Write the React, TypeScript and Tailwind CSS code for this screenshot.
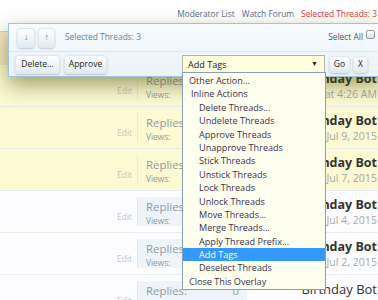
import React from 'react'

type Row = {
  selected: boolean
  bold: boolean
  date: string
}

const rows: Row[] = [
  { selected: true, bold: true, date: 'Today at 4:26 AM' },
  { selected: true, bold: true, date: 'Jul 9, 2015' },
  { selected: true, bold: true, date: 'Jul 7, 2015' },
  { selected: false, bold: true, date: 'Jul 4, 2015' },
  { selected: false, bold: true, date: 'Jul 2, 2015' },
  { selected: false, bold: false, date: 'Jul 1, 2015' },
]

const options: { label: string; indent: number; active?: boolean }[] = [
  { label: 'Other Action...', indent: 6 },
  { label: 'Inline Actions', indent: 8 },
  { label: 'Delete Threads...', indent: 16 },
  { label: 'Undelete Threads', indent: 16 },
  { label: 'Approve Threads', indent: 16 },
  { label: 'Unapprove Threads', indent: 16 },
  { label: 'Stick Threads', indent: 16 },
  { label: 'Unstick Threads', indent: 16 },
  { label: 'Lock Threads', indent: 16 },
  { label: 'Unlock Threads', indent: 16 },
  { label: 'Move Threads...', indent: 16 },
  { label: 'Merge Threads...', indent: 16 },
  { label: 'Apply Thread Prefix...', indent: 16 },
  { label: 'Add Tags', indent: 16, active: true },
  { label: 'Deselect Threads', indent: 16 },
  { label: 'Close This Overlay', indent: 6 },
]

function ThreadRow({ row }: { row: Row }) {
  const bg = row.selected ? 'bg-[#fcf9d3]' : 'bg-[#fdfdff]'
  return (
    <div className={`flex h-[42px] border-b border-[#e6ebf0] ${bg}`}>
      <div className="flex w-[137px] items-end justify-end pb-[8px] pr-[5px]">
        <span className="text-[8.4px] text-[#c4c4c4]">Edit</span>
      </div>
      <div
        className={`my-[6px] flex w-[110px] flex-col border-l border-[#e4e8ec] pl-[8px] pt-[2px] ${
          row.selected ? '' : 'bg-[#eef4fa]'
        }`}
      >
        <div className="flex items-baseline justify-between pr-[8px] leading-[16px]">
          <span className="text-[11.4px] text-[#9199a2]">Replies:</span>
          <span className="text-[11.4px] text-[#9199a2]">0</span>
        </div>
        <span className="text-[8.3px] leading-[12px] text-[#8f98a2]">Views:</span>
      </div>
      <div className="flex flex-1 flex-col items-end pr-[1px] pt-[6px]">
        <span className={`text-[12.5px] leading-[16px] text-[#333] ${row.bold ? 'font-bold' : 'text-[13px]'}`}>Birthday Bot</span>
        <span className="text-[10.6px] leading-[14px] text-[#a8a8a8]">{row.date}</span>
      </div>
    </div>
  )
}

function Btn({ children, className = '' }: { children: React.ReactNode; className?: string }) {
  return (
    <div
      className={`flex items-center justify-center rounded-[4px] border border-[#dfe6ec] bg-gradient-to-b from-white to-[#e3ebf2] text-[8.5px] text-[#222] shadow-[0_1px_2px_rgba(0,0,0,0.2)] ${className}`}
    >
      {children}
    </div>
  )
}

export default function App() {
  return (
    <div className="relative h-[300px] w-[378px] overflow-hidden bg-white font-['Open_Sans','Noto_Sans',sans-serif]">
      {/* forum links */}
      <div className="flex h-[23px] items-center justify-end gap-[7px] pr-[1px] pt-[6px] text-[8.4px]">
        <span className="text-[#5c6c8c]">Moderator List</span>
        <span className="text-[#5c6c8c]">Watch Forum</span>
        <span className="text-[#e0353a]">Selected Threads: 3</span>
      </div>

      {/* thread list */}
      <div className="flex h-[42px] flex-col">
        <div className="h-[9px] border-b border-[#cfd3d8] bg-white" />
        <div className="flex-1 bg-gradient-to-b from-[#f7e6c6] to-[#f2e6c0]" />
      </div>
      {rows.map((r, i) => (
        <ThreadRow key={i} row={r} />
      ))}

      {/* inline mod overlay */}
      <div className="absolute left-[8px] right-[-4px] top-[23px] h-[54px] border border-[#9fc4dd] bg-gradient-to-b from-[#f7fbfe] to-[#eaf3fa] shadow-[0_8px_20px_rgba(70,70,0,0.5)]">
        <div className="flex h-[28px] items-center border-b border-[#dbe7f0] pl-[8px] pr-[6px]">
          <Btn className="h-[20px] w-[18px] text-[#666]">↓</Btn>
          <Btn className="ml-[3px] h-[20px] w-[17px] text-[#666]">↑</Btn>
          <span className="ml-[10px] text-[8.4px] text-[#6a7f98]">Selected Threads: 3</span>
          <span className="ml-auto text-[8.4px] text-[#555]">Select All</span>
          <span className="ml-[3px] h-[9px] w-[9px] -translate-y-[3px] rounded-[2px] border border-[#999] bg-gradient-to-b from-white to-[#ddd]" />
        </div>
        <div className="flex h-[25px] items-center pl-[6px]">
          <Btn className="h-[19px] w-[45px]">Delete...</Btn>
          <Btn className="ml-[4px] h-[19px] w-[43px]">Approve</Btn>
          <div className="ml-[75px] flex h-[19px] w-[143px] items-center justify-between border border-[#b5b59a] bg-[#ffffe0] pl-[5px] pr-[6px] text-[9.1px] text-[#222]">
            <span>Add Tags</span>
            <span className="text-[7px]">▼</span>
          </div>
          <Btn className="ml-[4px] h-[17px] w-[21px]">Go</Btn>
          <Btn className="ml-[3px] h-[17px] w-[15px]">X</Btn>
        </div>
      </div>

      {/* dropdown list */}
      <div className="absolute left-[182px] top-[72px] w-[144px] border border-[#8a9fb5] bg-[#fffff0] py-[1px] text-[9.1px] text-[#3b2e4c]">
        {options.map(o => (
          <div
            key={o.label}
            className={`h-[13.4px] whitespace-nowrap leading-[13.4px] ${o.active ? 'bg-[#3399ff] text-white' : ''}`}
            style={{ paddingLeft: o.indent }}
          >
            {o.label}
          </div>
        ))}
      </div>
    </div>
  )
}
